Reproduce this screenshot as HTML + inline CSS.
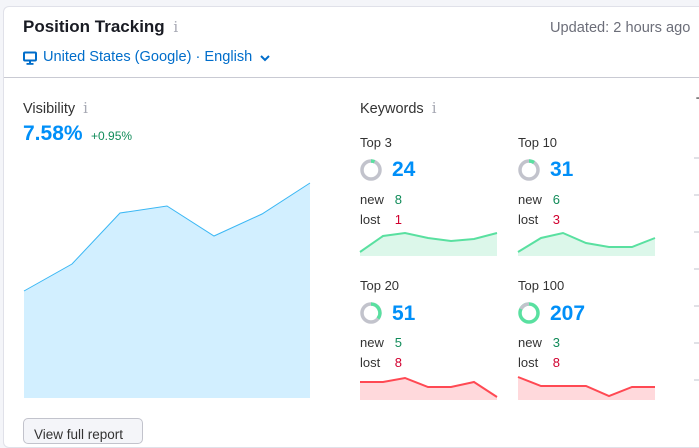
<!DOCTYPE html>
<html><head><style>
body{margin:0;width:699px;height:428px;overflow:hidden;background:#f4f5f9;font-family:"Liberation Sans",sans-serif;position:relative}
.card{position:absolute;left:3px;top:6px;width:720px;height:440px;background:#fff;border:1px solid #e0e1e9;border-radius:6px}
.a{position:absolute;white-space:nowrap}
.info{color:#a7a9b4;font-family:"DejaVu Serif",serif;font-size:15px;font-weight:normal}
.lbl{font-size:13px;color:#333}
.num{font-size:21px;font-weight:bold;color:#008ff8}
.g{color:#108b59}.r{color:#d1002f}
</style></head><body>
<div class="card"></div>
<div class="a" style="left:23px;top:17px;font-size:17px;font-weight:bold;color:#191b23">Position Tracking <span class="info" style="margin-left:4px">i</span></div>
<div class="a" style="left:550px;top:20px;font-size:14.6px;color:#6c6e79">Updated: 2 hours ago</div>
<svg class="a" style="left:23px;top:51px" width="14" height="14" viewBox="0 0 14 14"><rect x="1" y="1.5" width="12" height="8" rx="1" fill="none" stroke="#006dca" stroke-width="2"/><rect x="6" y="10" width="2" height="2" fill="#006dca"/><rect x="3.5" y="12" width="7" height="1.8" fill="#006dca"/></svg>
<div class="a" style="left:43px;top:49px;font-size:14.6px;color:#006dca">United States (Google) · English</div>
<svg class="a" style="left:259px;top:54px" width="12" height="8" viewBox="0 0 12 8"><path d="M2 2l4 4 4-4" fill="none" stroke="#006dca" stroke-width="2"/></svg>
<div class="a" style="left:4px;top:77px;width:700px;height:1px;background:#c9cad3"></div>
<div class="a" style="left:23px;top:99px;font-size:14.5px;color:#333">Visibility <span class="info" style="margin-left:4px">i</span></div>
<div class="a" style="left:23px;top:122px;font-size:21px;font-weight:bold;color:#008ff8">7.58%</div>
<div class="a" style="left:91px;top:129px;font-size:12px;color:#108b59">+0.95%</div>
<svg class="a" style="left:0;top:0" width="699" height="428">
<path d="M24 291L72 264L120 213L167 206L214 236L262 214L310 183L310 398L24 398Z" fill="#d2efff"/>
<path d="M24 291L72 264L120 213L167 206L214 236L262 214L310 183" fill="none" stroke="#3ab7f4" stroke-width="1"/>
<path d="M360 252L383 236L405 233L428 238L451 241L474 239L497 233L497 256L360 256Z" fill="#dcf7ea"/>
<path d="M360 252L383 236L405 233L428 238L451 241L474 239L497 233" fill="none" stroke="#59e0a0" stroke-width="2"/>
<path d="M518 252L541 238L563 233L586 243L609 247L632 247L655 238L655 256L518 256Z" fill="#dcf7ea"/>
<path d="M518 252L541 238L563 233L586 243L609 247L632 247L655 238" fill="none" stroke="#59e0a0" stroke-width="2"/>
<path d="M360 382L383 382L405 378L428 387L451 387L474 382L497 397L497 400L360 400Z" fill="#ffd9dc"/>
<path d="M360 382L383 382L405 378L428 387L451 387L474 382L497 397" fill="none" stroke="#ff4953" stroke-width="2"/>
<path d="M518 377L541 386L563 386L586 386L609 396L632 387L655 387L655 400L518 400Z" fill="#ffd9dc"/>
<path d="M518 377L541 386L563 386L586 386L609 396L632 387L655 387" fill="none" stroke="#ff4953" stroke-width="2"/>
<g stroke="#c2c3cc"><path d="M694 158h5M694 195h5M694 232h5M694 269h5M694 306h5M694 343h5M694 380h5"/></g>
<g fill="none" stroke-width="3.5">
<circle cx="371" cy="170" r="9" stroke="#c2c3cc"/><path d="M371 161a9 9 0 0 1 3.5 0.7" stroke="#59e0a0"/>
<circle cx="529" cy="170" r="9" stroke="#c2c3cc"/><path d="M529 161a9 9 0 0 1 5 1.5" stroke="#59e0a0"/>
<circle cx="371" cy="313" r="9" stroke="#c2c3cc"/><path d="M371 304a9 9 0 0 1 7 14.5" stroke="#59e0a0"/>
<circle cx="529" cy="313" r="9" stroke="#59e0a0"/><path d="M521 309a9 9 0 0 1 8-5" stroke="#c2c3cc"/>
</g>
</svg>
<div class="a" style="left:696px;top:94px;font-size:14px;color:#333">T</div>
<div class="a" style="left:360px;top:99px;font-size:14.5px;color:#333">Keywords <span class="info" style="margin-left:4px">i</span></div>
<div class="a lbl" style="left:360px;top:135px">Top 3</div>
<div class="a num" style="left:392px;top:158px">24</div>
<div class="a lbl" style="left:360px;top:192px">new&nbsp;&nbsp; <span class="g">8</span></div>
<div class="a lbl" style="left:360px;top:212px">lost&nbsp;&nbsp;&nbsp; <span class="r">1</span></div>
<div class="a lbl" style="left:518px;top:135px">Top 10</div>
<div class="a num" style="left:550px;top:158px">31</div>
<div class="a lbl" style="left:518px;top:192px">new&nbsp;&nbsp; <span class="g">6</span></div>
<div class="a lbl" style="left:518px;top:212px">lost&nbsp;&nbsp;&nbsp; <span class="r">3</span></div>
<div class="a lbl" style="left:360px;top:278px">Top 20</div>
<div class="a num" style="left:392px;top:302px">51</div>
<div class="a lbl" style="left:360px;top:335px">new&nbsp;&nbsp; <span class="g">5</span></div>
<div class="a lbl" style="left:360px;top:355px">lost&nbsp;&nbsp;&nbsp; <span class="r">8</span></div>
<div class="a lbl" style="left:518px;top:278px">Top 100</div>
<div class="a num" style="left:550px;top:302px">207</div>
<div class="a lbl" style="left:518px;top:335px">new&nbsp;&nbsp; <span class="g">3</span></div>
<div class="a lbl" style="left:518px;top:355px">lost&nbsp;&nbsp;&nbsp; <span class="r">8</span></div>
<div class="a" style="left:23px;top:418px;width:120px;height:26px;border:1px solid #c2c3cc;border-radius:5px;background:#f4f5f9;font-size:13.5px;color:#333;padding:8px 0 0 10px;box-sizing:border-box">View full report</div>
</body></html>
